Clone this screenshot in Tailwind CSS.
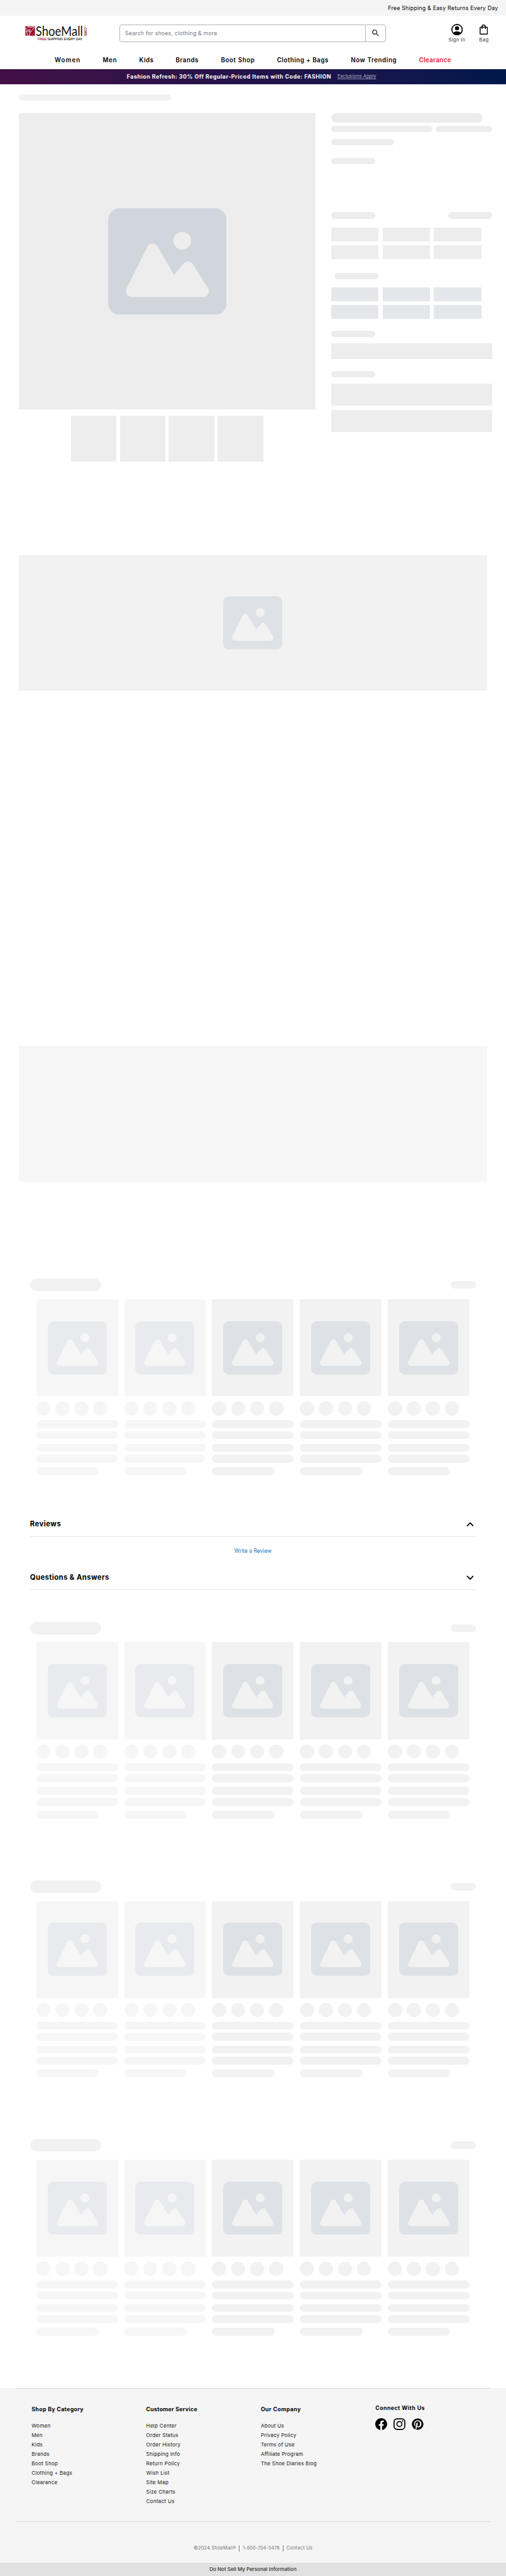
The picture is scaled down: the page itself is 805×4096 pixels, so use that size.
<!DOCTYPE html>
<html lang="en">
<head>
<meta charset="utf-8">
<title>ShoeMall</title>
<script src="https://cdn.jsdelivr.net/npm/@tailwindcss/browser@4"></script>
</head>
<body class="bg-white overflow-x-hidden">
<svg class="hidden">
  <symbol id="pic" viewBox="0 0 20 18"><path d="M18 0H2a2 2 0 0 0-2 2v14a2 2 0 0 0 2 2h16a2 2 0 0 0 2-2V2a2 2 0 0 0-2-2Zm-5.5 4a1.5 1.5 0 1 1 0 3 1.5 1.5 0 0 1 0-3Zm4.376 10.481A1 1 0 0 1 16 15H4a1 1 0 0 1-.895-1.447l3.5-7A1 1 0 0 1 7.468 6a.965.965 0 0 1 .9.5l2.775 4.757 1.546-1.887a1 1 0 0 1 1.618.1l2.541 4a1 1 0 0 1 .028 1.011Z"/></symbol>
</svg>
<div class="flex h-[6515px] w-[1280.4px] flex-col overflow-hidden bg-white font-['Inter','Liberation_Sans',sans-serif] whitespace-nowrap text-black [zoom:0.6287]">

  <!-- Utility bar -->
  <div class="flex h-[40px] shrink-0 items-center justify-end bg-[#f5f5f5] pr-[20px] pb-[1px] text-[14px] tracking-[0.347px]">Free Shipping &amp; Easy Returns Every Day</div>

  <!-- Header -->
  <header class="flex h-[89px] shrink-0 items-start pt-[10px]">
    <svg class="ml-[60px] h-[70px] w-[163px] overflow-visible" viewBox="60 50 163 70">
      <rect x="63.7" y="67" width="24.3" height="24" fill="#9b0f31"/>
      <g fill="none" stroke="#fff" stroke-width="1.5" stroke-linecap="round">
        <path d="M64 74.500q3-1.500 4.500-4q1.500-1.500 3.500-1.500q5 2 13-.5"/>
        <path d="M65 81q2-1 3.500-5q-2.500 9 .5 14.500"/>
        <path d="M72.500 75q-2 4 .5 6.500M75 75v7"/>
        <path d="M87.500 69.500q-4 5-7.500 8q-5 6-7.500 13"/>
      </g>
      <text x="90" y="90.600" font-family="Lato" font-size="34.500" textLength="119.500" lengthAdjust="spacingAndGlyphs" fill="#111">ShoeMall</text>
      <text transform="translate(212.300 70) rotate(90)" font-family="Lato" font-size="12.500" textLength="21.500" lengthAdjust="spacingAndGlyphs" fill="#a51238" stroke="#a51238" stroke-width=".3">com</text>
      <circle cx="213.500" cy="67" r="1.600" fill="none" stroke="#c77a8c" stroke-width=".7"/>
      <text x="95" y="103" font-family="Liberation Sans" font-size="8.600" textLength="113" lengthAdjust="spacingAndGlyphs" fill="#222" stroke="#222" stroke-width=".2"><tspan fill="#9b0f31" stroke="#9b0f31">FREE</tspan> SHIPPING EVERY DAY</text>
    </svg>
    <div class="mt-[12px] ml-[80px] flex h-[44px] w-[674px] rounded-[6px] border border-[#b3b3b3]">
      <div class="flex flex-1 items-center pl-[12px] text-[14px] tracking-[0.281px] text-[#757b85]">Search for shoes, clothing &amp; more</div>
      <div class="flex w-[52px] items-center border-l border-[#b3b3b3] pl-[17px]">
        <svg class="size-[17px]" viewBox="0 0 17 17" fill="none" stroke="#000" stroke-width="1.700"><circle cx="6.500" cy="6.500" r="5.200"/><path d="M10.200 10.200l6 6"/></svg>
      </div>
    </div>
    <div class="mt-[10px] ml-[158px] flex h-[52px] flex-col items-center">
      <svg class="size-[29px]" viewBox="0 0 29 29"><circle cx="14.500" cy="14.500" r="13.200" fill="none" stroke="#000" stroke-width="2.600"/><circle cx="14.500" cy="11" r="5.200"/><path d="M4.500 22.500c3-2.500 6.500-3.500 10-3.500s7 1 10 3.500c-2.500 3.500-6 5.500-10 5.500s-7.500-2-10-5.500Z"/></svg>
      <div class="mt-[5px] text-[12px] leading-[17px] tracking-[0.543px] text-[#333]">Sign In</div>
    </div>
    <div class="mt-[10px] ml-[35px] flex h-[52px] flex-col items-center">
      <svg class="h-[29px] w-[21px]" viewBox="0 0 21 29" fill="none" stroke="#000" stroke-width="2.300"><rect x="1.200" y="8.200" width="18.600" height="17.800" rx="1.800"/><path d="M6.300 12.800V7a4.200 4.200 0 0 1 8.400 0v5.800"/></svg>
      <div class="mt-[5px] text-[12px] leading-[17px] tracking-[0.775px] text-[#333]">Bag</div>
    </div>
  </header>

  <!-- Navigation -->
  <nav class="flex h-[46px] shrink-0 items-center pt-[2px] pl-[138.500px] text-[15.500px] font-semibold">
    <a class="w-[121.500px] tracking-[1.700px]">Women</a><a class="w-[92.500px] tracking-[1px]">Men</a><a class="w-[92px] tracking-[0.700px]">Kids</a><a class="w-[114.500px] tracking-[0.900px]">Brands</a><a class="w-[142px] tracking-[1px]">Boot Shop</a><a class="w-[187px] tracking-[0.780px]">Clothing + Bags</a><a class="w-[172.500px] tracking-[0.960px]">Now Trending</a><a class="tracking-[0.570px] text-[#e0202f]">Clearance</a>
  </nav>

  <!-- Promo -->
  <div class="flex h-[38px] shrink-0 items-center bg-linear-to-r from-[#430f46] via-[#22134a] to-[#00184b] pl-[321px]">
    <span class="text-[14px] font-bold tracking-[0.810px] text-white">Fashion Refresh: 30% Off Regular-Priced Items with Code: FASHION</span>
    <span class="ml-[16px] text-[12px] tracking-[0.115px] text-[#b4b5c9] underline decoration-[#8d8fae] underline-offset-2">Exclusions Apply</span>
  </div>

  <div class="mt-[25px] ml-[48px] h-[16px] w-[384px] shrink-0 rounded-full bg-[#f2f2f2]"></div>

  <!-- Product -->
  <main class="mt-[32px] flex h-[882px] shrink-0 pl-[48px]">
    <div class="w-[750px]">
      <div class="flex h-[750px] items-center justify-center bg-[#ededed]"><svg class="h-[270px] w-[300px] fill-[#d1d5dc]"><use href="#pic"/></svg></div>
      <div class="mt-[16px] flex justify-center gap-[8px]">
        <div class="size-[116px] bg-[#ededed]"></div><div class="size-[116px] bg-[#ededed]"></div><div class="size-[116px] bg-[#ededed]"></div><div class="size-[116px] bg-[#ededed]"></div>
      </div>
    </div>
    <div class="ml-[40px] w-[408px]">
      <div class="h-[24px] w-[384px] rounded-full bg-[#ededed]"></div>
      <div class="mt-[8px] flex justify-between"><div class="h-[16px] w-[256px] rounded-full bg-[#ededed]"></div><div class="h-[16px] w-[144px] rounded-full bg-[#ededed]"></div></div>
      <div class="mt-[18px] h-[16px] w-[160px] rounded-full bg-[#ededed]"></div>
      <div class="mt-[32px] h-[16px] w-[112px] rounded-full bg-[#ededed]"></div>
      <div class="mt-[121px] flex justify-between"><div class="h-[16px] w-[112px] rounded-full bg-[#ededed]"></div><div class="h-[16px] w-[112px] rounded-full bg-[#ededed]"></div></div>
      <div class="mt-[23px] grid grid-cols-[120px_120px_120px] gap-[10px]">
        <div class="h-[35px] bg-[#ededed]"></div><div class="h-[35px] bg-[#ededed]"></div><div class="h-[35px] bg-[#ededed]"></div><div class="h-[35px] bg-[#ededed]"></div><div class="h-[35px] bg-[#ededed]"></div><div class="h-[35px] bg-[#ededed]"></div>
      </div>
      <div class="mt-[34px] ml-[8px] h-[16px] w-[112px] rounded-full bg-[#ededed]"></div>
      <div class="mt-[21px] grid grid-cols-[120px_120px_120px] gap-[10px]">
        <div class="h-[35px] bg-[#e5e7eb]"></div><div class="h-[35px] bg-[#e5e7eb]"></div><div class="h-[35px] bg-[#e5e7eb]"></div><div class="h-[35px] bg-[#e5e7eb]"></div><div class="h-[35px] bg-[#e5e7eb]"></div><div class="h-[35px] bg-[#e5e7eb]"></div>
      </div>
      <div class="mt-[30px] h-[16px] w-[112px] rounded-full bg-[#ededed]"></div>
      <div class="mt-[16px] h-[40px] bg-[#ededed]"></div>
      <div class="mt-[30px] h-[16px] w-[112px] rounded-full bg-[#ededed]"></div>
      <div class="mt-[16px] h-[55.500px] bg-[#ededed]"></div>
      <div class="mt-[11.500px] h-[56px] bg-[#ededed]"></div>
    </div>
  </main>

  <div class="mt-[236px] ml-[48px] flex h-[343px] w-[1184px] shrink-0 items-center justify-center bg-[#f2f2f2]"><svg class="h-[135px] w-[150px] fill-[#dee1e6]"><use href="#pic"/></svg></div>
  <div class="mt-[899px] ml-[48px] h-[343px] w-[1184px] shrink-0 bg-[#f6f6f6]"></div>

  <section class="mt-[245px] h-[498px] shrink-0" data-carousel></section>

  <!-- Accordions -->
  <div class="mx-[76px] mt-[92px] flex h-[63px] shrink-0 items-center justify-between border-b border-[#e5e5e5] pt-[2px] pr-[6px]">
    <h2 class="text-[18px] font-bold tracking-[0.745px]">Reviews</h2>
    <svg class="h-[12px] w-[19px]" viewBox="0 0 19 12" fill="none" stroke="#000" stroke-width="2.800"><path d="M1.500 10.500l8-8l8 8"/></svg>
  </div>
  <div class="flex h-[72px] shrink-0 items-center justify-center pt-[1px] text-[13.500px] tracking-[0.010px] text-[#1a7ac4]">Write a Review</div>
  <div class="mx-[76px] flex h-[63px] shrink-0 items-center justify-between border-b border-[#e5e5e5] pt-[2px] pr-[6px]">
    <h2 class="text-[18px] font-bold tracking-[0.649px]">Questions &amp; Answers</h2>
    <svg class="h-[12px] w-[19px]" viewBox="0 0 19 12" fill="none" stroke="#000" stroke-width="2.800"><path d="M1.500 1.500l8 8l8-8"/></svg>
  </div>

  <section class="mt-[80px] h-[498px] shrink-0" data-carousel></section>
  <section class="mt-[156px] h-[498px] shrink-0" data-carousel></section>
  <section class="mt-[156px] h-[498px] shrink-0" data-carousel></section>

  <!-- Footer -->
  <footer class="mt-[132px] h-[442px] shrink-0 bg-[#f5f5f5] px-[40px]">
    <div class="flex h-[338px] border-y border-[#d6d9d9] pl-[40px]">
      <div class="w-[290px] pt-[43px]">
        <h3 class="text-[14px] leading-[20px] font-bold tracking-[0.519px]">Shop By Category</h3>
        <ul class="mt-[19px] text-[13px] leading-[24px] tracking-[0.350px] text-[#222]"><li>Women</li><li>Men</li><li>Kids</li><li>Brands</li><li>Boot Shop</li><li>Clothing + Bags</li><li>Clearance</li></ul>
      </div>
      <div class="w-[290px] pt-[43px]">
        <h3 class="text-[14px] leading-[20px] font-bold tracking-[0.412px]">Customer Service</h3>
        <ul class="mt-[19px] text-[13px] leading-[24px] tracking-[0.350px] text-[#222]"><li>Help Center</li><li>Order Status</li><li>Order History</li><li>Shipping Info</li><li>Return Policy</li><li>Wish List</li><li>Site Map</li><li>Size Charts</li><li>Contact Us</li></ul>
      </div>
      <div class="w-[290px] pt-[43px]">
        <h3 class="text-[14px] leading-[20px] font-bold tracking-[0.677px]">Our Company</h3>
        <ul class="mt-[19px] text-[13px] leading-[24px] tracking-[0.290px] text-[#222]"><li>About Us</li><li>Privacy Policy</li><li>Terms of Use</li><li>Affiliate Program</li><li>The Shoe Diaries Blog</li></ul>
      </div>
      <div class="pt-[40px]">
        <h3 class="text-[14px] leading-[20px] font-bold tracking-[0.679px]">Connect With Us</h3>
        <div class="mt-[15px] flex gap-[16px]">
          <svg class="size-[30px]" viewBox="0 0 24 24"><path d="M24 12.073C24 5.405 18.627 0 12 0S0 5.405 0 12.073C0 18.100 4.388 23.094 10.125 24v-8.437H7.078v-3.490h3.047v-2.660c0-3.025 1.792-4.697 4.533-4.697 1.312 0 2.686.236 2.686.236v2.971h-1.513c-1.491 0-1.956.930-1.956 1.886v2.264h3.328l-.532 3.490h-2.796V24C19.612 23.094 24 18.100 24 12.073Z"/></svg>
          <svg class="size-[30px]" viewBox="0 0 30 30" fill="none" stroke="#000" stroke-width="2.700"><rect x="1.400" y="1.700" width="27.200" height="26.600" rx="7.500"/><circle cx="15" cy="15" r="6.300"/><circle cx="23" cy="7.200" r="1.800" fill="#000" stroke="none"/></svg>
          <svg class="size-[30px]" viewBox="0 0 24 24"><path d="M12 .500C5.600.500.400 5.600.400 12c0 4.900 3.100 9.100 7.400 10.800-.1-.9-.2-2.300 0-3.300l1.400-5.800s-.3-.7-.3-1.700c0-1.600.9-2.800 2.100-2.800 1 0 1.500.7 1.500 1.600 0 1-.6 2.500-1 3.800-.3 1.200.6 2.100 1.700 2.100 2.100 0 3.700-2.200 3.700-5.400 0-2.800-2-4.800-4.900-4.800-3.400 0-5.300 2.500-5.300 5.100 0 1 .4 2.100.9 2.700.1.100.1.200.1.300l-.3 1.400c-.1.200-.2.300-.4.200-1.500-.7-2.400-2.900-2.400-4.600 0-3.800 2.700-7.200 7.900-7.200 4.100 0 7.300 2.900 7.300 6.900 0 4.100-2.600 7.400-6.200 7.400-1.200 0-2.300-.6-2.700-1.400l-.7 2.800c-.3 1-1 2.300-1.500 3.100 1.100.3 2.300.5 3.500.5 6.400 0 11.500-5.200 11.500-11.500S18.400.500 12 .500Z"/></svg>
        </div>
      </div>
    </div>
    <div class="flex pt-[60px] pl-[450px] text-[12px] leading-[16px] text-[#777]">
      <span class="w-[115px] tracking-[0.175px]">©2024 ShoeMall®</span>
      <span class="w-[110px] border-l border-[#777] pl-[8px] text-[11.800px]">1-800-704-5478</span>
      <span class="border-l border-[#777] pl-[8px] tracking-[0.312px]">Contact Us</span>
    </div>
  </footer>
  <div class="flex h-[33px] shrink-0 items-center justify-center bg-[#e1e1e1] text-[12.800px] font-medium text-[#333]">Do Not Sell My Personal Information</div>
</div>

<script>
// Loading placeholders for the product carousels
const card = (bg, icon) => {
  const dot = `<div class="size-[36px] rounded-full ${bg}"></div>`;
  const bar = m => `<div class="${m} h-[20px] rounded-full ${bg}"></div>`;
  return `<div>
    <div class="flex h-[246px] items-center justify-center ${bg}"><svg class="h-[135px] w-[150px] ${icon}"><use href="#pic"/></svg></div>
    <div class="mt-[12px] flex gap-[12px]">${dot.repeat(4)}</div>
    ${bar('mt-[12px]')}${bar('mt-[8px]')}${bar('mt-[12px]')}${bar('mt-[8px]')}${bar('mt-[12px] w-[158px]')}
  </div>`;
};
const light = card('bg-[#f6f6f6]', 'fill-[#e8eaee]');
const dark = card('bg-[#f2f2f2]', 'fill-[#dee1e6]');
document.querySelectorAll('[data-carousel]').forEach(s => {
  s.innerHTML = `<div class="mx-[76px] flex h-[32px] items-center justify-between"><div class="h-[32px] w-[180px] rounded-full bg-[#f2f2f2]"></div><div class="h-[20px] w-[64px] rounded-full bg-[#f2f2f2]"></div></div>
  <div class="mt-[20px] ml-[92px] grid w-[1096px] grid-cols-5 gap-[16px]">${light.repeat(2)}${dark.repeat(3)}</div>`;
});
</script>
</body>
</html>
